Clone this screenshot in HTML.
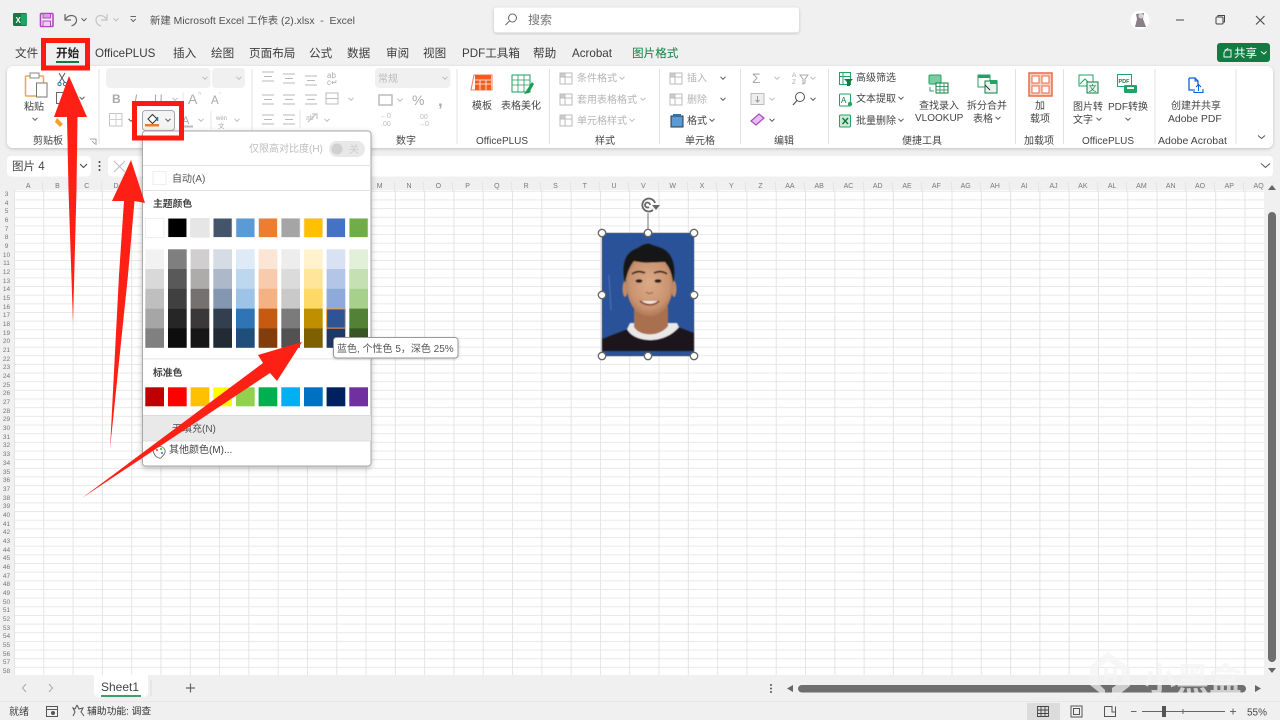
<!DOCTYPE html>
<html><head><meta charset="utf-8"><style>
html,body{margin:0;padding:0;width:1280px;height:720px;overflow:hidden;background:#f0f0f0}
*{font-family:"Liberation Sans","Noto Sans CJK SC",sans-serif}
#grid{position:absolute;left:14px;top:190px;width:1250px;height:485px;background-color:#fff;background-image:linear-gradient(to right,#e4e4e4 1px,transparent 1px),linear-gradient(to bottom,#e8e8e8 1px,transparent 1px);background-size:29.3px 100%,100% 8.67px;background-position:0 0,0 .8px}
#rows{position:absolute;left:0;top:191px;width:13px;text-align:center;font-size:6.5px;line-height:8.67px;color:#777;filter:blur(.3px)}
#cols{position:absolute;left:14px;top:182px;display:flex;font-size:7px;line-height:9px;color:#777;filter:blur(.3px)}
#cols span{width:29.3px;flex:none;text-align:center;box-sizing:border-box;border-right:1px solid #e6e6e6}
svg{position:absolute;left:0;top:0;filter:blur(.35px)}
text{white-space:pre}
.s{font-size:10px;fill:#444}
.g{font-size:10px;fill:#b4b4b4}
.l{font-size:10px;fill:#555}
.tb{font-size:11.6px;fill:#3c3c3c}
</style></head><body>
<div id="grid"></div>
<div id="cols"><span>A</span><span>B</span><span>C</span><span>D</span><span>E</span><span>F</span><span>G</span><span>H</span><span>I</span><span>J</span><span>K</span><span>L</span><span>M</span><span>N</span><span>O</span><span>P</span><span>Q</span><span>R</span><span>S</span><span>T</span><span>U</span><span>V</span><span>W</span><span>X</span><span>Y</span><span>Z</span><span>AA</span><span>AB</span><span>AC</span><span>AD</span><span>AE</span><span>AF</span><span>AG</span><span>AH</span><span>AI</span><span>AJ</span><span>AK</span><span>AL</span><span>AM</span><span>AN</span><span>AO</span><span>AP</span><span>AQ</span></div>
<div id="rows">3<br>4<br>5<br>6<br>7<br>8<br>9<br>10<br>11<br>12<br>13<br>14<br>15<br>16<br>17<br>18<br>19<br>20<br>21<br>22<br>23<br>24<br>25<br>26<br>27<br>28<br>29<br>30<br>31<br>32<br>33<br>34<br>35<br>36<br>37<br>38<br>39<br>40<br>41<br>42<br>43<br>44<br>45<br>46<br>47<br>48<br>49<br>50<br>51<br>52<br>53<br>54<br>55<br>56<br>57<br>58</div>
<svg width="1280" height="720" viewBox="0 0 1280 720" xmlns="http://www.w3.org/2000/svg">
<defs>
<filter id="sh" x="-10%" y="-10%" width="120%" height="120%"><feDropShadow dx="0" dy="1" stdDeviation="1.5" flood-color="#000" flood-opacity=".2"/></filter>
<filter id="sh2" x="-10%" y="-10%" width="120%" height="120%"><feDropShadow dx="0" dy="2" stdDeviation="3" flood-color="#000" flood-opacity=".25"/></filter>
<filter id="soft"><feGaussianBlur stdDeviation=".6"/></filter>
<radialGradient id="skin" cx="50%" cy="45%" r="60%"><stop offset="0" stop-color="#dcaa88"/><stop offset=".7" stop-color="#c99370"/><stop offset="1" stop-color="#a46d4d"/></radialGradient>
<path id="c" d="M-2.5,-1.2 L0,1.3 L2.5,-1.2" fill="none" stroke="#555" stroke-width="1"/>
<path id="cg" d="M-2.5,-1.2 L0,1.3 L2.5,-1.2" fill="none" stroke="#bbb" stroke-width="1"/>
<g id="l3" stroke="#b8b8b8" stroke-width="1" fill="none"><path d="M0,0H12M2,4.500H10M0,9H12"/></g>
<g id="ic" fill="none" stroke="#bbb" stroke-width="1"><rect x="0" y="0" width="12" height="11"/><path d="M0,4H12M5,0V11"/><rect x="0" y="0" width="5" height="4" fill="#ccc"/></g>
<g id="hd"><circle r="3.700" fill="#fff" stroke="#666" stroke-width="1.300"/></g>
</defs>

<!-- Title bar -->
<rect x="13" y="13" width="14" height="13" rx="1.500" fill="#107c41"/><rect x="21" y="14" width="6" height="11" fill="#21a366"/><text x="15.500" y="23" font-size="8" font-weight="bold" fill="#fff">X</text>
<rect x="40.500" y="13.500" width="12.500" height="13" rx="1" fill="none" stroke="#b146c2" stroke-width="1.600"/><rect x="43" y="13.500" width="7.500" height="4.500" fill="#d7a2e0" stroke="#b146c2"/><rect x="43" y="21" width="7.500" height="5.500" fill="#e9d0ee" stroke="#b146c2"/>
<path d="M65,14V20H71M65,20C68,14 76,14 76.500,20C76.800,23 74,25 71.500,26" fill="none" stroke="#666" stroke-width="1.200"/>
<use href="#c" x="84" y="19.500"/>
<path d="M107,14V20H101M107,20C104,14 96,14 96,20C96,23 98,25 101,26" fill="none" stroke="#c4c4c4" stroke-width="1.200"/>
<use href="#cg" x="116" y="19.500"/>
<path d="M130.500,16.500H136M130.800,19L133.200,21.500L135.700,19" fill="none" stroke="#666" stroke-width="1"/>
<text x="150" y="24" font-size="10.400" fill="#505050">新建 Microsoft Excel 工作表 (2).xlsx  -  Excel</text>
<rect x="494" y="7.500" width="305" height="25" rx="3" fill="#fff" filter="url(#sh)"/>
<circle cx="512.500" cy="18" r="4" fill="none" stroke="#666"/><path d="M509.500,21L505.500,25" stroke="#666"/>
<text x="528" y="24" font-size="12" fill="#777">搜索</text>
<circle cx="1140" cy="20" r="9.500" fill="#fff"/><path d="M1136,14L1144,13L1143,19L1146,27H1135L1137,19Z" fill="#8a8088"/><circle cx="1141" cy="16" r="2.500" fill="#d8cfcf"/>
<path d="M1176,20H1184" stroke="#444" stroke-width="1"/>
<rect x="1216" y="17" width="7" height="7" rx="1" fill="none" stroke="#444"/><path d="M1218,17V15.500H1224.500V22H1223" fill="none" stroke="#444"/>
<path d="M1256,16L1264.500,24.500M1264.500,16L1256,24.500" stroke="#444"/>

<!-- Tabs -->
<g class="tabs">
<text x="15" y="57" class="tb">文件</text>
<text x="56" y="57" class="tb" font-weight="bold" style="fill:#222">开始</text>
<text x="95" y="57" class="tb">OfficePLUS</text>
<text x="173" y="57" class="tb">插入</text>
<text x="211" y="57" class="tb">绘图</text>
<text x="249" y="57" class="tb">页面布局</text>
<text x="309" y="57" class="tb">公式</text>
<text x="347" y="57" class="tb">数据</text>
<text x="386" y="57" class="tb">审阅</text>
<text x="423" y="57" class="tb">视图</text>
<text x="462" y="57" class="tb" font-size="11">PDF工具箱</text>
<text x="533" y="57" class="tb">帮助</text>
<text x="572" y="57" class="tb">Acrobat</text>
<text x="632" y="57" class="tb" style="fill:#107c41">图片格式</text>
</g>
<rect x="56" y="61" width="23" height="2" fill="#107c41"/>
<rect x="1217" y="43" width="53" height="19" rx="3" fill="#107c41"/>
<path d="M1224.500,50H1231V57H1224V52.500L1228,48" fill="none" stroke="#fff" stroke-width=".9"/>
<text x="1234" y="57" font-size="11.500" fill="#fff">共享</text>
<path d="M1261,51.500L1264,54L1266.500,51.500" fill="none" stroke="#fff"/>

<!-- Ribbon -->
<rect x="7" y="66" width="1266" height="82" rx="6" fill="#fff" filter="url(#sh)"/>
<path d="M99,69V144M252,69V144M457,69V144M549.500,69V144M659.500,69V144M740.500,69V144M828.500,69V144M1015.500,69V144M1063.500,69V144M1155,69V144M1236,69V144" stroke="#e2e2e2"/>
<g font-size="10" fill="#444">
<text x="33" y="144">剪贴板</text><text x="396" y="144">数字</text><text x="476" y="144">OfficePLUS</text><text x="595" y="144">样式</text><text x="685" y="144">单元格</text><text x="774" y="144">编辑</text><text x="902" y="144">便捷工具</text><text x="1024" y="144">加载项</text><text x="1082" y="144">OfficePLUS</text><text x="1158" y="144" font-size="10.500">Adobe Acrobat</text>
</g>
<!-- clipboard -->
<rect x="25.500" y="76" width="18" height="20" rx="1" fill="#fff" stroke="#e9a84e" stroke-width="1.500"/><rect x="30" y="73" width="9" height="5" fill="#fff" stroke="#888"/><rect x="36.500" y="83" width="10.500" height="14" fill="#fff" stroke="#777"/>
<text x="24" y="110" class="s">粘贴</text><use href="#c" x="35" y="119"/>
<path d="M59,73L65,83M65,73L59,83" stroke="#555"/><circle cx="59.500" cy="84" r="1.600" fill="none" stroke="#2e75b5"/><circle cx="65" cy="84" r="1.600" fill="none" stroke="#2e75b5"/>
<rect x="56.500" y="92.500" width="9" height="11" fill="#fff" stroke="#666"/><use href="#c" x="82" y="98"/>
<path d="M57,118L63,124L60,127L55,122Z" fill="#f0a030"/>
<path d="M90,139h6v6M92,141l3,3" fill="none" stroke="#888" stroke-width=".8"/>
<!-- font -->
<rect x="106" y="68" width="104.500" height="20" rx="4" fill="#f0f0f0"/><rect x="212" y="68" width="33" height="20" rx="4" fill="#f0f0f0"/>
<use href="#cg" x="205" y="78"/><use href="#cg" x="239" y="78"/>
<text x="112" y="103" font-size="12" font-weight="bold" fill="#aaa">B</text>
<text x="134" y="103" font-size="12" font-style="italic" fill="#aaa">I</text>
<text x="154" y="103" font-size="12" text-decoration="underline" fill="#aaa">U</text><use href="#cg" x="175" y="99"/>
<path d="M183,92.500V110" stroke="#e6e6e6"/>
<text x="188" y="104" font-size="14" fill="#aaa">A</text><text x="198" y="97" font-size="7" fill="#bbb">^</text>
<text x="211" y="104" font-size="11.500" fill="#aaa">A</text><text x="219" y="98" font-size="7" fill="#bbb">ˇ</text>
<rect x="109.500" y="113.500" width="12.500" height="12.500" fill="none" stroke="#c4c4c4"/><path d="M116,113.500V126M109.500,119.500H122" stroke="#d0d0d0"/><use href="#c" x="131" y="120"/>
<rect x="142.500" y="110.500" width="32" height="20" rx="3" fill="#f4f4f4" stroke="#a8a8a8"/>
<path d="M148,119L152.500,114.500L157,119L152.500,123.500Z" fill="#fff" stroke="#333"/><path d="M157.500,117V121" stroke="#2e75b5" stroke-width="1.500"/>
<rect x="145" y="124" width="14" height="2.500" fill="#ed7d31"/>
<use href="#c" x="168" y="120"/>
<text x="182" y="124" font-size="11" fill="#aaa">A</text><rect x="181" y="125.500" width="12" height="2" fill="#bbb"/><use href="#cg" x="201" y="120"/>
<path d="M211,111V129" stroke="#e6e6e6"/>
<text x="216" y="120" font-size="6" fill="#aaa">wén</text><text x="218" y="128" font-size="6.500" fill="#aaa">文</text><use href="#cg" x="237" y="120"/>
<!-- alignment -->
<use href="#l3" x="262" y="72"/><use href="#l3" x="283" y="74"/><use href="#l3" x="305" y="76"/>
<text x="327" y="78" font-size="8" fill="#aaa">ab</text><text x="327" y="85" font-size="8" fill="#aaa">c↵</text>
<use href="#l3" x="262" y="95"/><use href="#l3" x="283" y="95"/><use href="#l3" x="305" y="95"/>
<rect x="326" y="93" width="12" height="11" fill="none" stroke="#bbb"/><path d="M326,98.500H338" stroke="#bbb"/><use href="#cg" x="351" y="99"/>
<use href="#l3" x="262" y="115"/><use href="#l3" x="283" y="115"/>
<path d="M300,110V128" stroke="#e6e6e6"/>
<path d="M308,122L316,114M312,114H317V119" fill="none" stroke="#bbb"/><text x="306" y="120" font-size="7" fill="#bbb">ab</text>
<use href="#cg" x="327" y="120"/>
<!-- number -->
<rect x="375" y="68" width="75.500" height="20" rx="4" fill="#f0f0f0"/><text x="378" y="82" font-size="10" fill="#bbb">常规</text><use href="#cg" x="445" y="78"/>
<rect x="379" y="95" width="13" height="10" fill="none" stroke="#bbb" stroke-width="1.500"/><use href="#cg" x="400" y="100"/>
<text x="412" y="105" font-size="14" fill="#aaa">%</text>
<text x="438" y="106" font-size="17" font-weight="bold" fill="#aaa">,</text>
<text x="380" y="118" font-size="7" fill="#bbb">←0</text><text x="381" y="126" font-size="7" fill="#bbb">.00</text>
<text x="418" y="119" font-size="7" fill="#bbb">.00</text><text x="418" y="126" font-size="7" fill="#bbb">→0</text>
<!-- OfficePLUS -->
<path d="M471,90L474,75H492V90Z" fill="none" stroke="#ec7d5a"/><rect x="475" y="75" width="16" height="15" fill="#f25c1f"/><path d="M475,80H491M475,84H491M480,80V90M486,80V90" stroke="#fff" stroke-width=".8"/>
<text x="472" y="109" class="s">模板</text>
<rect x="512" y="75" width="18" height="17" fill="#fff" stroke="#219e60"/><path d="M512,80H530M512,85H530M518,75V92M524,75V92" stroke="#219e60" stroke-width=".8"/><path d="M524,94L532,82L534,84L529,93Z" fill="#1a9e5a"/>
<text x="501" y="109" class="s">表格美化</text>
<!-- styles -->
<use href="#ic" x="560" y="73"/><use href="#ic" x="560" y="94"/><use href="#ic" x="560" y="115"/>
<text x="577" y="81.500" class="g">条件格式</text><use href="#cg" x="622" y="78"/>
<text x="577" y="103" class="g">套用表格格式</text><use href="#cg" x="643" y="99"/>
<text x="577" y="124" class="g">单元格样式</text><use href="#cg" x="632" y="120"/>
<!-- cells -->
<use href="#ic" x="670" y="73"/><use href="#ic" x="670" y="94"/>
<text x="687" y="81.500" class="g">插入</text><use href="#c" x="723" y="78"/>
<text x="687" y="103" class="g">删除</text><use href="#c" x="723" y="99"/>
<rect x="671" y="116" width="12" height="11" fill="#5b9bd5" stroke="#333"/><rect x="673" y="114" width="8" height="2" fill="#2e75b5"/>
<text x="687" y="124" class="s">格式</text><use href="#c" x="712" y="120"/>
<!-- editing -->
<text x="752" y="83" font-size="14" fill="#aaa">Σ</text><use href="#cg" x="777" y="78"/>
<text x="792" y="77" font-size="6.500" fill="#aaa">A</text><text x="792" y="84" font-size="6.500" fill="#aaa">Z</text><path d="M800,75H808L805,79V83L803,84V79Z" fill="none" stroke="#aaa"/><use href="#cg" x="813" y="78"/>
<rect x="751" y="93.500" width="13" height="11" fill="#eee" stroke="#bbb"/><path d="M757.500,96V102M755.500,100L757.500,102L759.500,100" fill="none" stroke="#999"/><use href="#cg" x="772" y="99"/>
<circle cx="800" cy="97" r="4.500" fill="none" stroke="#555"/><path d="M797,100.500L793,105" stroke="#555" stroke-width="1.200"/><use href="#c" x="813" y="99"/>
<path d="M751,121L759,114L764,118L756,125Z" fill="#e2bfee" stroke="#b146c2" stroke-width="1.200"/><use href="#c" x="772" y="120"/>
<!-- convenience -->
<rect x="839.500" y="72.500" width="11" height="12" fill="#fff" stroke="#21a366"/><path d="M839.500,76.500H850M843,72.500V84" stroke="#21a366"/><path d="M844,79H853L850,82V86H847V82Z" fill="#107c41"/>
<text x="856" y="81" class="s">高级筛选</text>
<rect x="839.500" y="94" width="11" height="12" rx="1" fill="#fff" stroke="#21a366"/><text x="841" y="103" font-size="8" fill="#107c41">A</text><circle cx="850" cy="104" r="2.200" fill="#21a366"/>
<text x="856" y="102" class="s">文本提取</text><use href="#c" x="901" y="98"/>
<rect x="839.500" y="115" width="11" height="12" rx="1" fill="#cde9d8" stroke="#21a366"/><path d="M842.500,118L848,124M848,118L842.500,124" stroke="#107c41" stroke-width="1.500"/>
<text x="856" y="124" class="s">批量删除</text><use href="#c" x="901" y="120"/>
<rect x="929" y="75" width="12" height="9" rx="1" fill="#7ccba2" stroke="#21a366"/><rect x="936" y="83" width="12" height="10" fill="#fff" stroke="#107c41"/><path d="M936,86.500H948M936,90H948M940,83V93M944,83V93" stroke="#107c41" stroke-width=".7"/><path d="M930,87V91H934" fill="none" stroke="#21a366"/>
<text x="919" y="109" class="s">查找录入</text><text x="915" y="121" class="s">VLOOKUP</text>
<rect x="978" y="75" width="12" height="12" fill="#fff" stroke="#21a366"/><rect x="978" y="75" width="12" height="3" fill="#21a366"/><rect x="985" y="81" width="12" height="12" fill="#e8f5ee" stroke="#107c41"/><rect x="990" y="80" width="7" height="4" fill="#21a366"/><path d="M985,85L990,90" stroke="#333"/>
<text x="967" y="109" class="s">拆分合并</text><text x="973" y="122" class="s">表格</text><use href="#c" x="998" y="118"/>
<!-- add-ins -->
<rect x="1029" y="73" width="23" height="23" fill="#f6d0c0" stroke="#e86c4a" stroke-width="1.500"/><rect x="1032" y="76" width="7" height="7" fill="#fff" stroke="#e86c4a"/><rect x="1042" y="76" width="7" height="7" fill="#fff" stroke="#e86c4a"/><rect x="1032" y="86" width="7" height="7" fill="#fff" stroke="#e86c4a"/><rect x="1042" y="86" width="7" height="7" fill="#fff" stroke="#e86c4a"/>
<text x="1035" y="109" class="s">加</text><text x="1030" y="122" class="s">载项</text>
<!-- OfficePLUS 2 -->
<rect x="1079" y="75" width="14" height="11" fill="#fff" stroke="#21a366"/><path d="M1080,84L1085,79L1089,83" fill="none" stroke="#21a366"/><rect x="1087" y="82" width="11" height="11" fill="#e8f5ee" stroke="#107c41"/><text x="1088.500" y="91" font-size="8" fill="#107c41">文</text>
<text x="1073" y="110" class="s">图片转</text><text x="1073" y="123" class="s">文字</text><use href="#c" x="1099" y="119"/>
<rect x="1117.500" y="74.500" width="14" height="12" fill="#fff" stroke="#21a366"/><text x="1118.500" y="83" font-size="5.500" font-weight="bold" fill="#107c41">PDF</text><rect x="1124" y="85" width="13" height="8" rx="1" fill="#21a366"/><rect x="1127" y="87" width="7" height="2" fill="#fff"/>
<text x="1108" y="110" class="s">PDF转换</text><use href="#c" x="1128" y="119"/>
<!-- Adobe -->
<path d="M1189,78H1195L1198,81V85M1189,78V90H1193" fill="none" stroke="#0b62d6" stroke-width="1.300"/><path d="M1195,78V81H1198" fill="none" stroke="#0b62d6"/><path d="M1194,89V92.500H1203V89M1198.500,91V85M1196,87L1198.500,84.500L1201,87" fill="none" stroke="#0b62d6" stroke-width="1.100"/>
<text x="1171" y="109" class="s">创建并共享</text><text x="1168" y="122" font-size="10.400" fill="#444">Adobe PDF</text>
<path d="M1258,135.500L1261.500,138.500L1265,135.500" fill="none" stroke="#555"/>

<!-- Formula bar -->
<rect x="7" y="156" width="84" height="20.500" rx="4" fill="#fff"/>
<text x="12" y="170" font-size="11.500" fill="#444">图片 4</text>
<path d="M80,164L83.500,167.500L87,164" fill="none" stroke="#444"/>
<circle cx="99.500" cy="162" r="1" fill="#444"/><circle cx="99.500" cy="166" r="1" fill="#444"/><circle cx="99.500" cy="170" r="1" fill="#444"/>
<rect x="108" y="156" width="1165" height="20.500" rx="4" fill="#fff"/>
<path d="M114,161L125,172M125,161L114,172" stroke="#bbb"/>
<path d="M1261,163.500L1265.500,167.500L1270,163.500" fill="none" stroke="#555"/>

<!-- scrollbars + bottom -->
<rect x="1264" y="190" width="16" height="485" fill="#f0f0f0"/>
<rect x="1268" y="212" width="8" height="450" rx="4" fill="#6e6e6e"/>
<path d="M1268,190H1276L1272,185Z" fill="#666"/><path d="M1268,668H1276L1272,673Z" fill="#666"/>
<path d="M94,675V692C94,695 96,697 99,697H143C146,697 148,695 148,692V675Z" fill="#fff"/>
<text x="101" y="691" font-size="12" fill="#444">Sheet1</text>
<rect x="101" y="695" width="40" height="2" fill="#3f9e6e"/>
<path d="M26,684L22.500,688L26,692" fill="none" stroke="#aaa"/><path d="M49,684L52.500,688L49,692" fill="none" stroke="#aaa"/>
<path d="M151,680V696" stroke="#ddd"/>
<path d="M186,688H195M190.500,683.500V692.500" stroke="#666" stroke-width="1.200"/>
<circle cx="771" cy="685" r="1" fill="#555"/><circle cx="771" cy="688.500" r="1" fill="#555"/><circle cx="771" cy="692" r="1" fill="#555"/>
<path d="M793,685V692L787,688.500Z" fill="#666"/>
<rect x="798" y="685" width="448" height="7.500" rx="3.700" fill="#6e6e6e"/>
<path d="M1255,685V692L1261,688.500Z" fill="#666"/>
<!-- status bar -->
<rect x="0" y="701" width="1280" height="1" fill="#e6e6e6"/>
<text x="9" y="715" font-size="10" fill="#444">就绪</text>
<rect x="46.500" y="706.500" width="11" height="10" fill="none" stroke="#555"/><path d="M46.500,709.500H57.500" stroke="#555"/><circle cx="53" cy="713" r="2" fill="#555"/>
<path d="M77,705L79,709L83,708L81,712L84,716M77,705L75,709L73,708L75,712L73,716" fill="none" stroke="#555"/>
<text x="87" y="714.500" font-size="9.800" fill="#333">辅助功能: 调查</text>
<rect x="1027" y="703" width="33" height="17" fill="#dcdcdc"/>
<path d="M1037.500,706.500H1048.500V716.500H1037.500ZM1037.500,710H1048.500M1037.500,713.500H1048.500M1041,706.500V716.500M1045,706.500V716.500" fill="none" stroke="#444" stroke-width=".9"/>
<rect x="1071" y="706" width="11" height="11" fill="none" stroke="#555"/><rect x="1073.500" y="708.500" width="6" height="6" fill="none" stroke="#555"/>
<path d="M1104.500,706.500V716.500H1115.500V706.500M1104.500,706.500H1112V712H1115.500" fill="none" stroke="#555"/>
<path d="M1131,711.500H1136.500M1142,711.500H1225M1183,709V714M1230,711.500H1236M1233,708.500V714.500" stroke="#666"/>
<rect x="1162" y="706" width="4" height="11" fill="#555"/>
<text x="1247" y="715.500" font-size="10" fill="#444">55%</text>

<!-- Picture -->
<rect x="602" y="233" width="92" height="123" fill="#2a5298"/>
<g filter="url(#soft)">
<path d="M609,275L611,310" stroke="#4a76b8" stroke-width="1"/>
<path d="M602,339L628,329L650,336L678,327L694,333V351H602Z" fill="#1b191e"/>
<path d="M627,329C634,343 664,345 679,327L677,323L630,323Z" fill="#ebe8e8"/>
<path d="M634,308V327C640,337 660,337 668,326V306Z" fill="#a87050"/>
<ellipse cx="625" cy="289" rx="2.500" ry="8" fill="#c08a68"/><ellipse cx="674" cy="289" rx="2.500" ry="8" fill="#c08a68"/>
<path d="M626,270C626,252 672,252 673,270C674,290 672,303 662,312C655,318 644,318 637,312C628,303 625,290 626,270Z" fill="url(#skin)"/>
<path d="M625,283C621,264 625,252 638,248C642,245 646,243 650,244C654,246 657,246 661,248C672,252 677,266 673,283C672,274 670,268 665,262C655,262 645,264 634,261C629,267 627,274 625,283Z" fill="#171312"/>
<path d="M632,274C636,271 641,271 645,273M654,273C658,271 663,271 667,274" stroke="#2a1d18" stroke-width="1.700" fill="none"/>
<ellipse cx="639" cy="281" rx="3.500" ry="1.700" fill="#2a1a15"/><ellipse cx="658" cy="281" rx="3.500" ry="1.700" fill="#2a1a15"/>
<path d="M640,301C646,306 654,306 659,301" stroke="#8a4a3a" stroke-width="1.800" fill="#f3e6dc"/>
<path d="M646,292C648,294 651,294 653,292" stroke="#9a6547" fill="none"/>
</g>
<rect x="602" y="233" width="92" height="123" fill="none" stroke="#777" stroke-width=".7"/>
<path d="M648,233V213" stroke="#777"/>
<path d="M655,203A6.500,6.500 0 1 0 653,210M650,205A2.500,2.500 0 1 0 649,207" fill="none" stroke="#666" stroke-width="1.800"/><path d="M652,205H660L656,210Z" fill="#666"/>
<use href="#hd" x="602" y="233"/><use href="#hd" x="648" y="233"/><use href="#hd" x="694" y="233"/><use href="#hd" x="602" y="295"/><use href="#hd" x="694" y="295"/><use href="#hd" x="602" y="356"/><use href="#hd" x="648" y="356"/><use href="#hd" x="694" y="356"/>

<!-- Menu -->
<rect x="142.500" y="131" width="228.500" height="335" rx="3" fill="#fff" stroke="#a8a8a8" filter="url(#sh2)"/>
<text x="249" y="152" font-size="10" fill="#bdbdbd">仅限高对比度(H)</text>
<rect x="329" y="141" width="36" height="16" rx="8" fill="#e8e8e8"/><circle cx="337" cy="149" r="5.500" fill="#d0d0d0"/><text x="349" y="153" font-size="10" fill="#ccc">关</text>
<path d="M143,165.500H371M143,190.500H371" stroke="#e2e2e2"/>
<rect x="153" y="171.500" width="13" height="13" fill="#fff" stroke="#eee"/>
<text x="172" y="182" font-size="10" fill="#555">自动(A)</text>
<text x="153" y="207" font-size="9.800" font-weight="bold" fill="#444">主题颜色</text>
<g stroke="#e4e4e4" stroke-width=".6">
<rect x="145.300" y="218.300" width="18.700" height="19" fill="#ffffff"/><rect x="168" y="218.300" width="18.700" height="19" fill="#000000"/><rect x="190.600" y="218.300" width="18.700" height="19" fill="#e7e6e6"/><rect x="213.300" y="218.300" width="18.700" height="19" fill="#44546a"/><rect x="236" y="218.300" width="18.700" height="19" fill="#5b9bd5"/><rect x="258.600" y="218.300" width="18.700" height="19" fill="#ed7d31"/><rect x="281.300" y="218.300" width="18.700" height="19" fill="#a5a5a5"/><rect x="304" y="218.300" width="18.700" height="19" fill="#ffc000"/><rect x="326.600" y="218.300" width="18.700" height="19" fill="#4472c4"/><rect x="349.300" y="218.300" width="18.700" height="19" fill="#70ad47"/>
</g>
<g>
<rect x="145.300" y="249.300" width="18.700" height="20" fill="#f2f2f2"/><rect x="145.300" y="269" width="18.700" height="20" fill="#d9d9d9"/><rect x="145.300" y="288.800" width="18.700" height="20" fill="#bfbfbf"/><rect x="145.300" y="308.600" width="18.700" height="20" fill="#a6a6a6"/><rect x="145.300" y="328.400" width="18.700" height="19.400" fill="#808080"/>
<rect x="168" y="249.300" width="18.700" height="20" fill="#7f7f7f"/><rect x="168" y="269" width="18.700" height="20" fill="#595959"/><rect x="168" y="288.800" width="18.700" height="20" fill="#404040"/><rect x="168" y="308.600" width="18.700" height="20" fill="#262626"/><rect x="168" y="328.400" width="18.700" height="19.400" fill="#0d0d0d"/>
<rect x="190.600" y="249.300" width="18.700" height="20" fill="#d0cece"/><rect x="190.600" y="269" width="18.700" height="20" fill="#aeabab"/><rect x="190.600" y="288.800" width="18.700" height="20" fill="#767171"/><rect x="190.600" y="308.600" width="18.700" height="20" fill="#3a3838"/><rect x="190.600" y="328.400" width="18.700" height="19.400" fill="#171616"/>
<rect x="213.300" y="249.300" width="18.700" height="20" fill="#d6dce4"/><rect x="213.300" y="269" width="18.700" height="20" fill="#adb9ca"/><rect x="213.300" y="288.800" width="18.700" height="20" fill="#8497b0"/><rect x="213.300" y="308.600" width="18.700" height="20" fill="#333f4f"/><rect x="213.300" y="328.400" width="18.700" height="19.400" fill="#222b35"/>
<rect x="236" y="249.300" width="18.700" height="20" fill="#deebf6"/><rect x="236" y="269" width="18.700" height="20" fill="#bdd7ee"/><rect x="236" y="288.800" width="18.700" height="20" fill="#9dc3e6"/><rect x="236" y="308.600" width="18.700" height="20" fill="#2e75b5"/><rect x="236" y="328.400" width="18.700" height="19.400" fill="#1e4e79"/>
<rect x="258.600" y="249.300" width="18.700" height="20" fill="#fbe5d5"/><rect x="258.600" y="269" width="18.700" height="20" fill="#f7cbac"/><rect x="258.600" y="288.800" width="18.700" height="20" fill="#f4b183"/><rect x="258.600" y="308.600" width="18.700" height="20" fill="#c55a11"/><rect x="258.600" y="328.400" width="18.700" height="19.400" fill="#833c0b"/>
<rect x="281.300" y="249.300" width="18.700" height="20" fill="#ededed"/><rect x="281.300" y="269" width="18.700" height="20" fill="#dbdbdb"/><rect x="281.300" y="288.800" width="18.700" height="20" fill="#c9c9c9"/><rect x="281.300" y="308.600" width="18.700" height="20" fill="#7b7b7b"/><rect x="281.300" y="328.400" width="18.700" height="19.400" fill="#525252"/>
<rect x="304" y="249.300" width="18.700" height="20" fill="#fff2cc"/><rect x="304" y="269" width="18.700" height="20" fill="#fee599"/><rect x="304" y="288.800" width="18.700" height="20" fill="#ffd965"/><rect x="304" y="308.600" width="18.700" height="20" fill="#bf8f00"/><rect x="304" y="328.400" width="18.700" height="19.400" fill="#7f6000"/>
<rect x="326.600" y="249.300" width="18.700" height="20" fill="#d9e2f3"/><rect x="326.600" y="269" width="18.700" height="20" fill="#b4c6e7"/><rect x="326.600" y="288.800" width="18.700" height="20" fill="#8eaadb"/><rect x="326.600" y="308.600" width="18.700" height="20" fill="#2f5496"/><rect x="326.600" y="328.400" width="18.700" height="19.400" fill="#1f3864"/>
<rect x="349.300" y="249.300" width="18.700" height="20" fill="#e2efd9"/><rect x="349.300" y="269" width="18.700" height="20" fill="#c5e0b3"/><rect x="349.300" y="288.800" width="18.700" height="20" fill="#a8d08d"/><rect x="349.300" y="308.600" width="18.700" height="20" fill="#538135"/><rect x="349.300" y="328.400" width="18.700" height="19.400" fill="#375623"/>
</g>
<rect x="326.600" y="308.900" width="18.700" height="19.200" fill="none" stroke="#f0a040" stroke-width="1"/>
<rect x="143" y="358" width="228" height="1.500" fill="#eee"/>
<text x="153" y="376" font-size="9.800" font-weight="bold" fill="#444">标准色</text>
<g>
<rect x="145.300" y="387.300" width="18.700" height="19" fill="#c00000"/><rect x="168" y="387.300" width="18.700" height="19" fill="#ff0000"/><rect x="190.600" y="387.300" width="18.700" height="19" fill="#ffc000"/><rect x="213.300" y="387.300" width="18.700" height="19" fill="#ffff00"/><rect x="236" y="387.300" width="18.700" height="19" fill="#92d050"/><rect x="258.600" y="387.300" width="18.700" height="19" fill="#00b050"/><rect x="281.300" y="387.300" width="18.700" height="19" fill="#00b0f0"/><rect x="304" y="387.300" width="18.700" height="19" fill="#0070c0"/><rect x="326.600" y="387.300" width="18.700" height="19" fill="#002060"/><rect x="349.300" y="387.300" width="18.700" height="19" fill="#7030a0"/>
</g>
<rect x="143" y="415.500" width="228" height="25" fill="#e9e9e9"/>
<path d="M143,415.500H371M143,441H371" stroke="#dcdcdc"/>
<text x="172" y="432" font-size="10" fill="#555">无填充(N)</text>
<text x="169" y="453" font-size="10" fill="#444">其他颜色(M)...</text>
<path d="M153,450C154,445 163,445 165,450C166,454 162,456 161,458C158,459 154,456 153,450Z" fill="#fff" stroke="#555" stroke-width=".8"/><circle cx="157" cy="450" r="1" fill="#e04040"/><circle cx="161" cy="449" r="1" fill="#40a040"/><circle cx="162" cy="453" r="1" fill="#4070d0"/>

<!-- tooltip -->
<rect x="333.500" y="337.500" width="124.500" height="20.500" rx="3" fill="#fff" stroke="#999" filter="url(#sh)"/>
<text x="337" y="352" font-size="10" fill="#555">蓝色, 个性色 5，深色 25%</text>

<!-- Watermark -->
<path fill="#f4f4f4" fill-opacity=".72" fill-rule="evenodd" d="M1090,666L1108,652L1130,668V686L1112,700V688L1122,681V671L1108,661L1098,668V683L1105,690V697L1090,685ZM1104,668H1108V673H1113V668H1117V684H1113V678H1108V684H1104Z"/>
<text x="1143" y="691" font-size="33" font-weight="bold" fill="#f4f4f4" fill-opacity=".72">小黑盒</text>

<!-- Arrows -->
<g fill="#ff2015">
<polygon points="69,76 87,117 77.500,117 76.500,190 73,323 68.500,190 67,117 54,117"/>
<polygon points="131,160 145,203 134.500,201 128,275 110,449 119,275 124,201 112,201"/>
<polygon points="302,342 258,355 263,363 82,498 270,373 277,381"/>
</g>
<rect x="43.500" y="40.500" width="44" height="27.500" fill="none" stroke="#ff1a10" stroke-width="5"/>
<rect x="134.500" y="103.500" width="47" height="34.500" fill="none" stroke="#ff1a10" stroke-width="5"/>
</svg>
</body></html>
